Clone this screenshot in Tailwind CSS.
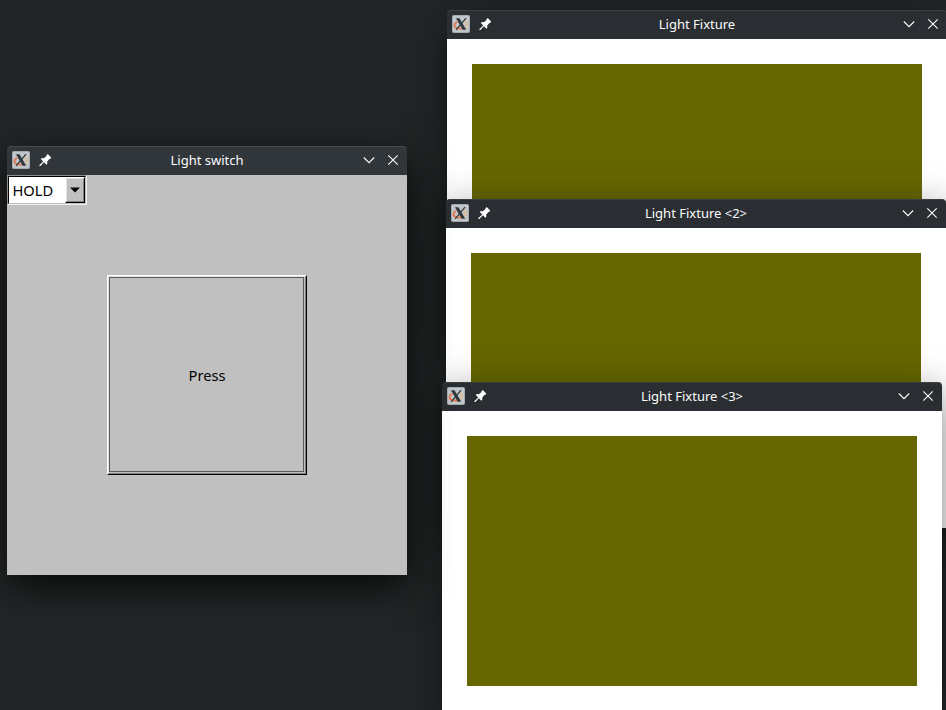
<!DOCTYPE html>
<html lang="en">
<head>
<meta charset="utf-8">
<title>Light switch</title>
<script src="https://cdn.jsdelivr.net/npm/@tailwindcss/browser@4"></script>
</head>
<body class="relative h-[710px] w-[946px] overflow-hidden bg-[#232627] font-['Noto_Sans',sans-serif]">
<svg class="hidden">
  <symbol id="xorg" viewBox="0 0 18 18">
    <rect x=".5" y=".5" width="17" height="17" rx="1" fill="#bfc7cb" stroke="#a3abaf"/>
    <path d="M5.500 7C2 8 1.500 11.500 4.500 12.800c3 1.300 6 1 8-.3" fill="none" stroke="#ea7245" stroke-width="1.700"/>
    <path d="M12 6c3.200.3 4.200 2.800 3 4.800-.8 1.200-2 1.800-3.200 2" fill="none" stroke="#e5b97f" stroke-width="1.300"/>
    <path d="M4 3.200h3.500L14.200 14.800h-3.500z" fill="#30373b"/>
    <path d="M14 3.200 4.200 14.800" stroke="#30373b" stroke-width="1.300"/>
  </symbol>
  <symbol id="pin" viewBox="0 0 12 12">
    <path d="M8.100 0 11.400 3.500l-1.200 1.200-.6-.1-2.100 2.500.2 1.900-.9.900-2.300-2.300L1.300 11H.4v-.9l3.500-3.200L1.700 4.700l.9-.9 1.900.2L7 1.900 6.900 1.200z" fill="#fff"/>
  </symbol>
  <symbol id="min" viewBox="0 0 12 12"><path d="M.8 3.500 6 8.700l5.200-5.200" fill="none" stroke="#fcfcfc" stroke-width="1.100"/></symbol>
  <symbol id="close" viewBox="0 0 12 12"><path d="m1.300 1.300 9.400 9.400m0-9.400-9.400 9.400" fill="none" stroke="#fcfcfc" stroke-width="1.100"/></symbol>
</svg>

<section class="absolute left-[447px] top-[10px] w-[500px] rounded-t-[4px] shadow-[0_12px_40px_rgba(0,0,0,0.5)]">
  <header class="flex h-[29px] items-center rounded-t-[4px] border-t border-[#3b4045] bg-[#2a2e32] pb-[2px] pl-[5px] pr-[8px]">
    <svg class="size-[18px]"><use href="#xorg"/></svg>
    <svg class="ml-[9px] size-[13px]"><use href="#pin"/></svg>
    <h1 class="flex-1 pr-px text-center text-[13px] leading-[18px] text-[#fcfcfc]">Light Fixture</h1>
    <svg class="size-[12px]"><use href="#min"/></svg>
    <svg class="ml-[12px] size-[12px]"><use href="#close"/></svg>
  </header>
  <div class="h-[300px] bg-white p-[25px]"><div class="h-full bg-[#666600]"></div></div>
</section>

<section class="absolute left-[446px] top-[199px] w-[500px] rounded-t-[4px] shadow-[0_12px_40px_rgba(0,0,0,0.5)]">
  <header class="flex h-[29px] items-center rounded-t-[4px] border-t border-[#3b4045] bg-[#2a2e32] pb-[2px] pl-[5px] pr-[8px]">
    <svg class="size-[18px]"><use href="#xorg"/></svg>
    <svg class="ml-[9px] size-[13px]"><use href="#pin"/></svg>
    <h1 class="flex-1 pr-px text-center text-[13px] leading-[18px] text-[#fcfcfc]">Light Fixture &lt;2&gt;</h1>
    <svg class="size-[12px]"><use href="#min"/></svg>
    <svg class="ml-[12px] size-[12px]"><use href="#close"/></svg>
  </header>
  <div class="h-[300px] bg-white p-[25px]"><div class="h-full bg-[#666600]"></div></div>
</section>

<section class="absolute left-[442px] top-[382px] w-[500px] rounded-t-[4px] shadow-[0_12px_40px_rgba(0,0,0,0.5)]">
  <header class="flex h-[29px] items-center rounded-t-[4px] border-t border-[#3b4045] bg-[#2a2e32] pb-[2px] pl-[5px] pr-[8px]">
    <svg class="size-[18px]"><use href="#xorg"/></svg>
    <svg class="ml-[9px] size-[13px]"><use href="#pin"/></svg>
    <h1 class="flex-1 pr-px text-center text-[13px] leading-[18px] text-[#fcfcfc]">Light Fixture &lt;3&gt;</h1>
    <svg class="size-[12px]"><use href="#min"/></svg>
    <svg class="ml-[12px] size-[12px]"><use href="#close"/></svg>
  </header>
  <div class="h-[300px] bg-white p-[25px]"><div class="h-full bg-[#666600]"></div></div>
</section>

<section class="absolute left-[7px] top-[146px] w-[400px] rounded-t-[4px] shadow-[0_12px_40px_rgba(0,0,0,0.8)]">
  <header class="flex h-[29px] items-center rounded-t-[4px] border-t border-[#454b50] bg-[#31363b] pb-[2px] pl-[5px] pr-[8px]">
    <svg class="size-[18px]"><use href="#xorg"/></svg>
    <svg class="ml-[9px] size-[13px]"><use href="#pin"/></svg>
    <h1 class="flex-1 pr-px text-center text-[13px] leading-[18px] text-[#fcfcfc]">Light switch</h1>
    <svg class="size-[12px]"><use href="#min"/></svg>
    <svg class="ml-[12px] size-[12px]"><use href="#close"/></svg>
  </header>
  <div class="flex h-[400px] flex-col bg-[#c0c0c0]">
    <div class="h-[30px] w-[80px] border border-[#f0f0f0] border-l-[#909090] border-t-[#909090]">
      <div class="flex h-full border border-b-[#c0c0c0] border-l-black border-r-[#c0c0c0] border-t-black bg-white">
        <span class="w-[56px] pl-[3.500px] text-[14.667px] leading-[27px] text-black">HOLD</span>
        <div class="flex flex-1 border border-b-black border-l-white border-r-black border-t-white bg-[#c0c0c0]">
          <div class="flex flex-1 items-center justify-center border border-b-[#808080] border-l-[#e3e3e3] border-r-[#808080] border-t-[#e3e3e3]">
            <svg class="h-[6px] w-[10px]" viewBox="0 0 10 6"><path d="M0 .5h10L5 5.500z"/></svg>
          </div>
        </div>
      </div>
    </div>
    <button class="mx-auto mt-[70px] size-[200px] border border-b-black border-l-white border-r-black border-t-white">
      <span class="block size-full border border-b-[#808080] border-l-[#e3e3e3] border-r-[#808080] border-t-[#e3e3e3] pb-px pr-px">
        <span class="flex size-full items-center justify-center border border-[#5c5c5c] pl-[1px] text-[14.667px] leading-[20px] text-black">Press</span>
      </span>
    </button>
  </div>
</section>
</body>
</html>
